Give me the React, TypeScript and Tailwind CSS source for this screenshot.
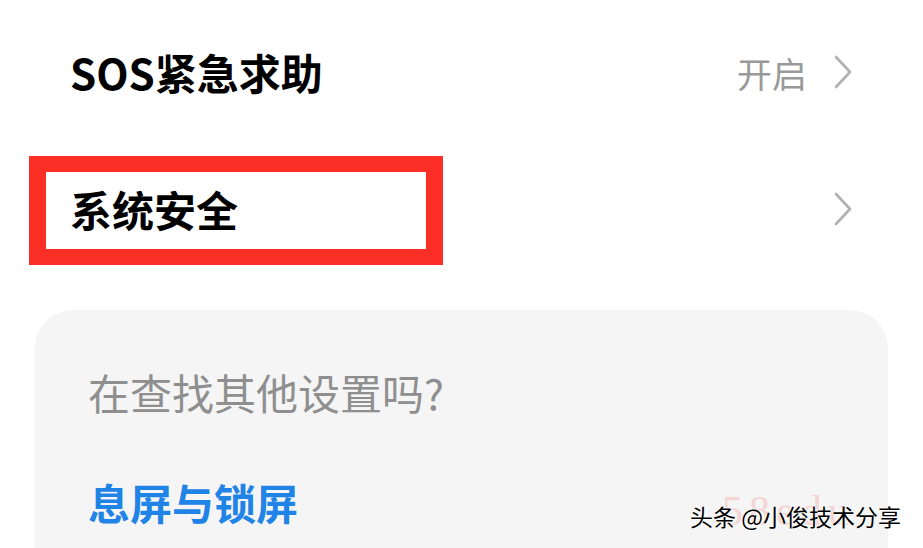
import React from "react";

const Chevron = () => (
  <svg width="20" height="34" viewBox="0 0 20 34" fill="none" className="shrink-0">
    <path d="M3 2 L17 17 L3 32" stroke="#b0b0b0" strokeWidth="2.6" strokeLinecap="round" strokeLinejoin="round" />
  </svg>
);

export default function App() {
  const font = { fontFamily: '"Noto Sans CJK SC", "Noto Sans", sans-serif' };
  return (
    <div className="relative w-[923px] h-[548px] overflow-hidden bg-white" style={font}>
      <div className="flex flex-col">
        <div className="h-[144px] flex items-center justify-between pl-[70px] pr-[70px]">
          <span className="text-[42px] font-semibold text-black leading-none">SOS紧急求助</span>
          <div className="flex items-center gap-[26px]">
            <span className="text-[35px] text-[#999999] leading-none">开启</span>
            <Chevron />
          </div>
        </div>
        <div className="h-[130px] flex items-center justify-between pl-[70px] pr-[70px]">
          <span className="text-[42px] font-semibold text-black leading-none">系统安全</span>
          <Chevron />
        </div>
        <div className="mt-[36px] ml-[35px] w-[853px] h-[300px] rounded-[38px] bg-[#f5f5f5] pl-[53px] pt-[58px]">
          <div className="text-[42px] text-[#8f8f8f] leading-[48px]">在查找其他设置吗?</div>
          <div className="mt-[62px] text-[42px] font-semibold text-[#1f84e6] leading-[48px]">息屏与锁屏</div>
        </div>
      </div>

      <div className="absolute left-[29px] top-[156px] w-[414px] h-[109px] border-x-[17px] border-y-[16px] border-[#fc2f26]" />

      <div className="absolute left-[722px] top-[490px] text-[42px] text-[#f4d4d4] leading-none tracking-[6px]" style={{ fontFamily: '"Liberation Serif", serif' }}>
        58edu
      </div>
      <div
        className="absolute left-[690px] top-[505px] text-[23px] text-black leading-none whitespace-nowrap"
        style={{ textShadow: "0 0 2px #fff, 0 0 2px #fff, 0 0 3px #fff" }}
      >
        头条 @小俊技术分享
      </div>
    </div>
  );
}
